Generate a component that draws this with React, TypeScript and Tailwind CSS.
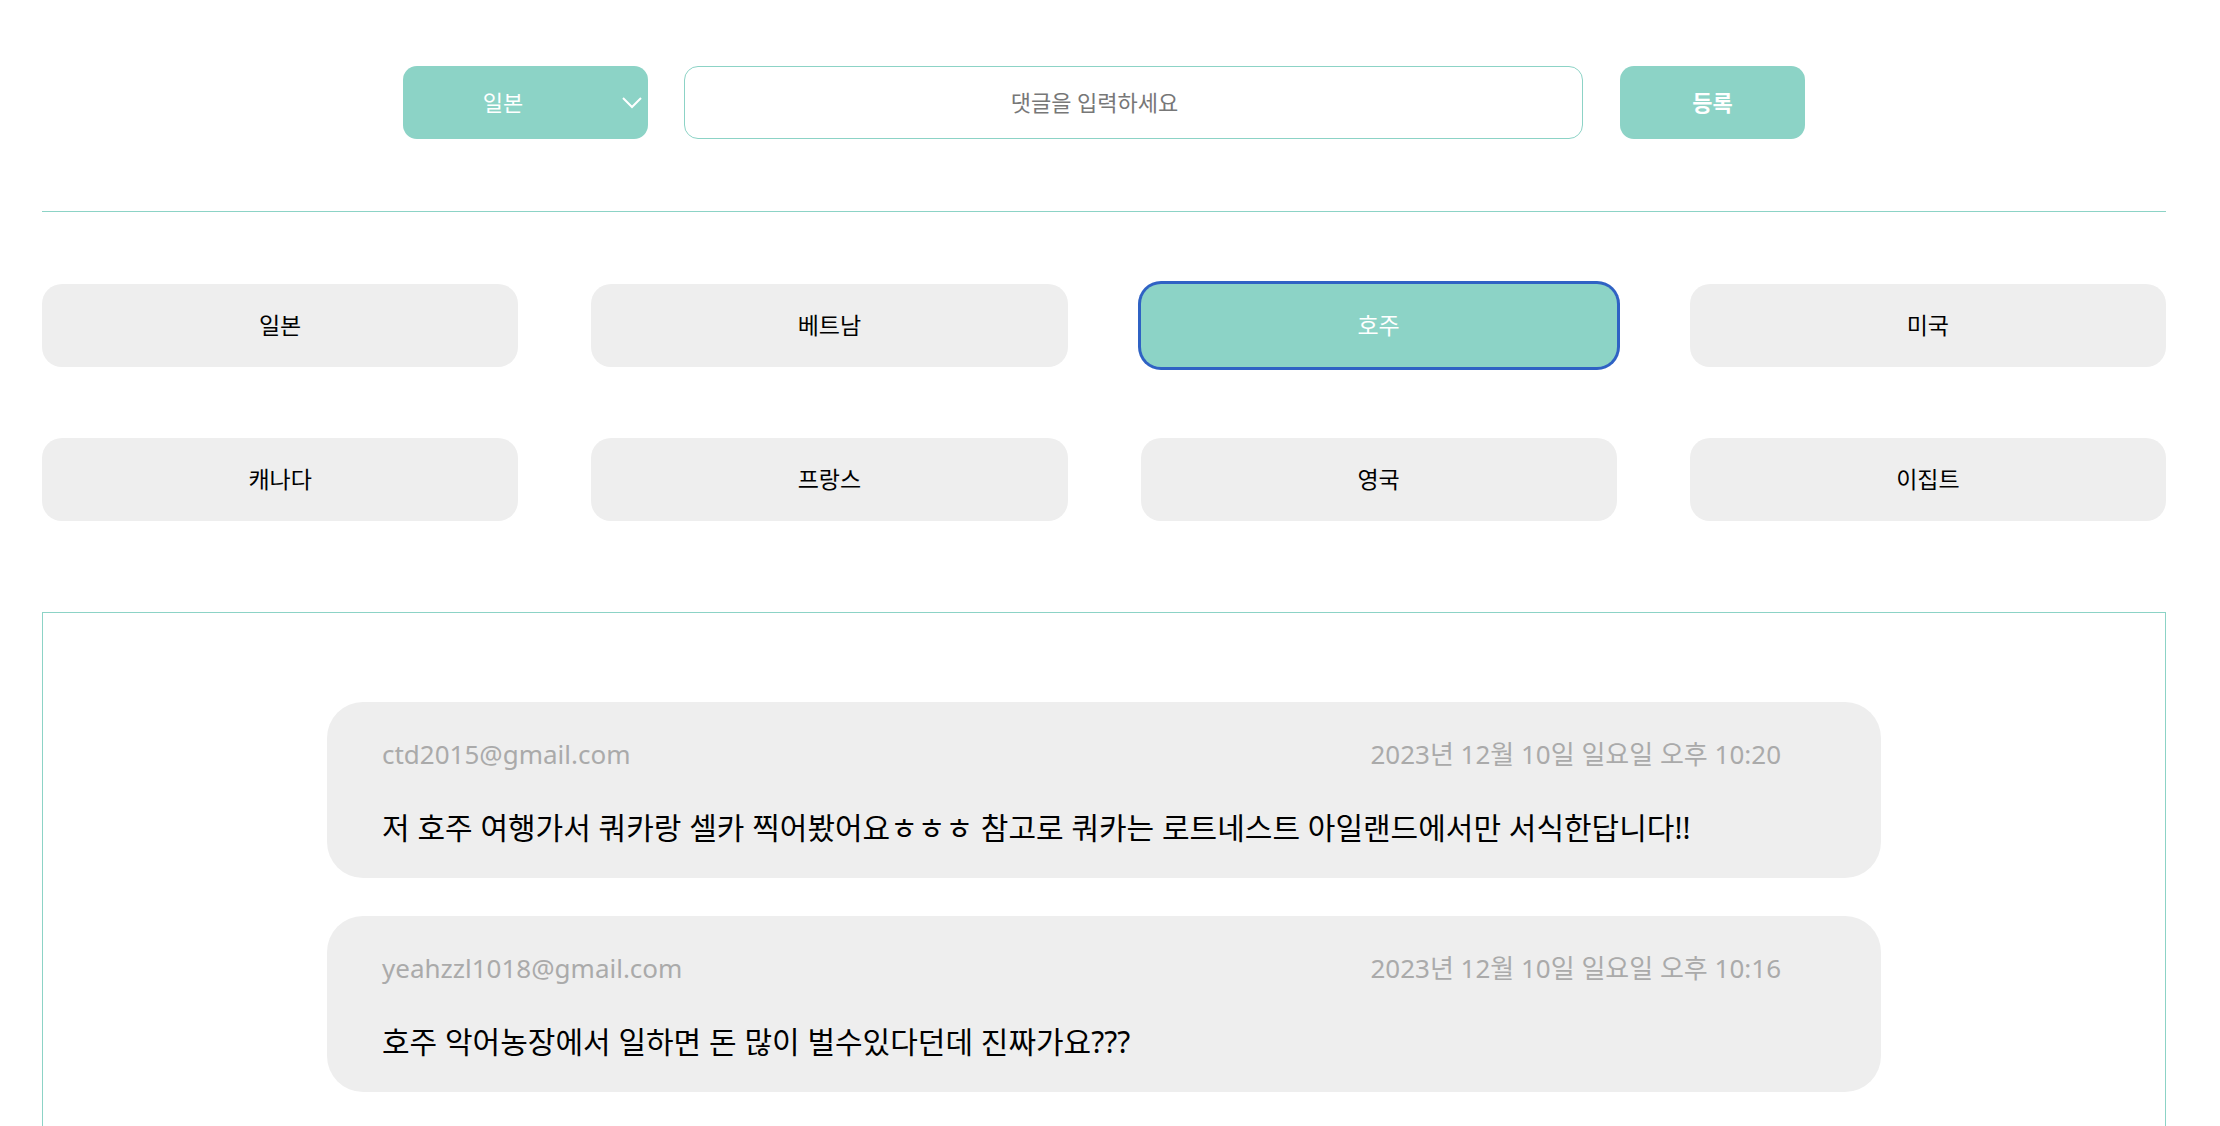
const countries = ["일본", "베트남", "호주", "미국", "캐나다", "프랑스", "영국", "이집트"];

const comments = [
  {
    email: "ctd2015@gmail.com",
    date: "2023년 12월 10일 일요일 오후 10:20",
    body: "저 호주 여행가서 쿼카랑 셀카 찍어봤어요ㅎㅎㅎ 참고로 쿼카는 로트네스트 아일랜드에서만 서식한답니다!!",
  },
  {
    email: "yeahzzl1018@gmail.com",
    date: "2023년 12월 10일 일요일 오후 10:16",
    body: "호주 악어농장에서 일하면 돈 많이 벌수있다던데 진짜가요???",
  },
];

function CommentCard({ email, date, body }: { email: string; date: string; body: string }) {
  return (
    <div className="flex h-[176px] w-[1554px] flex-col rounded-[36px] bg-[#eeeeee] px-[55px] pt-[34px]">
      <div className="mr-[45px] flex items-center justify-between text-[26px] leading-[36px] text-[#aaaaaa]">
        <span>{email}</span>
        <span>{date}</span>
      </div>
      <p className="mt-[36px] text-[30px] leading-[40px] text-black">{body}</p>
    </div>
  );
}

export default function App() {
  const selected = "호주";

  return (
    <div
      className="min-h-screen bg-white"
      style={{ fontFamily: '"Noto Sans", "Noto Sans CJK KR", sans-serif' }}
    >
      <div className="ml-[42px] w-[2124px] pt-[66px]">
        {/* input bar */}
        <div className="ml-[361px] flex items-center gap-[36px]">
          <div className="relative flex h-[73px] w-[245px] items-center justify-center rounded-[14px] bg-[#8cd3c6] pr-[45px] text-[22px] text-white">
            일본
            <svg
              className="absolute right-[6px] top-[31px]"
              width="20"
              height="12"
              viewBox="0 0 20 12"
              fill="none"
              stroke="white"
              strokeWidth="2"
            >
              <polyline points="1,1 10,10 19,1" />
            </svg>
          </div>
          <div className="flex h-[73px] w-[899px] items-center justify-center rounded-[14px] border border-[#8cd3c6] pr-[78px] text-[22px] text-[#777777]">
            댓글을 입력하세요
          </div>
          <button className="ml-px flex h-[73px] w-[185px] items-center justify-center rounded-[14px] bg-[#8cd3c6] text-[22px] font-bold text-white">
            등록
          </button>
        </div>

        <div className="mt-[72px] border-t border-[#8cd3c6]" />

        {/* country filter */}
        <div className="mt-[72px] grid grid-cols-4 gap-x-[73px] gap-y-[71px]">
          {countries.map((c) =>
            c === selected ? (
              <button
                key={c}
                className="flex h-[83px] items-center justify-center rounded-[20px] bg-[#8cd3c6] text-[23px] text-white ring-[3px] ring-[#2f62c4]"
              >
                {c}
              </button>
            ) : (
              <button
                key={c}
                className="flex h-[83px] items-center justify-center rounded-[20px] bg-[#eeeeee] text-[23px] text-black"
              >
                {c}
              </button>
            )
          )}
        </div>

        {/* comments */}
        <div className="mt-[91px] border border-[#8cd3c6] pb-[90px] pt-[89px]">
          <div className="ml-[284px] flex flex-col gap-[38px]">
            {comments.map((c) => (
              <CommentCard key={c.email} {...c} />
            ))}
          </div>
        </div>
      </div>
    </div>
  );
}
